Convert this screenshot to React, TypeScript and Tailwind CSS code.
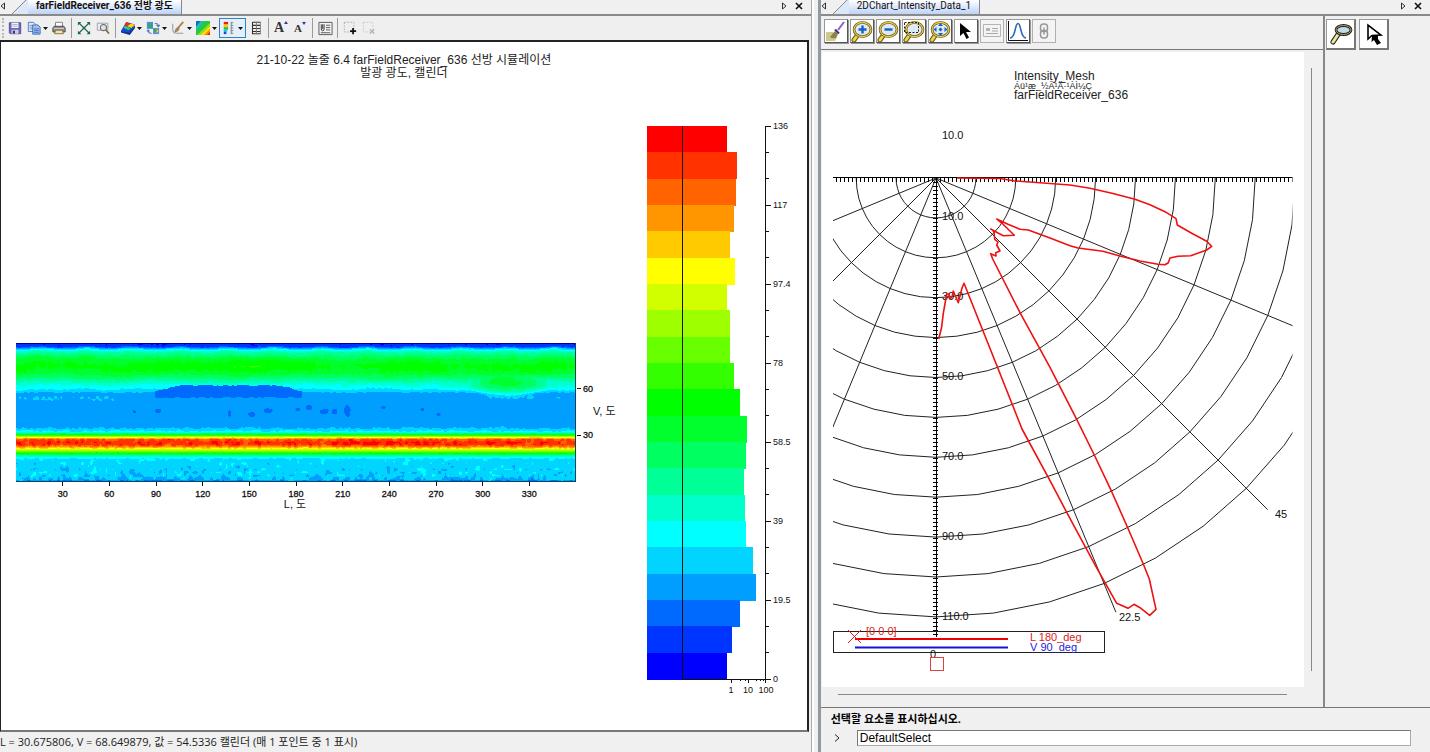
import type { ReactNode } from 'react';

const UI_FONT = "font-['Open_Sans','Noto_Sans_CJK_KR',sans-serif]";
const TAB_FONT = "font-['Roboto','Noto_Sans_CJK_KR',sans-serif]";
const PLOT_FONT = "font-['Liberation_Sans','Noto_Sans_CJK_KR',sans-serif]";

// low to high intensity
const PALETTE = [
  '#0000ff', '#0035ff', '#006aff', '#009fff', '#00d4ff', '#00ffff', '#00ffcb',
  '#00ff96', '#00ff61', '#00ff2c', '#00ff00', '#33ff00', '#68ff00', '#9dff00',
  '#d2ff00', '#ffff00', '#ffcb00', '#ff9600', '#ff6400', '#ff3200', '#ff0000',
];

const BAR_WIDTHS = [80, 90, 89, 87, 83, 88, 80, 83, 83, 87, 93, 100, 99, 97, 98, 99, 106, 109, 93, 85, 80];

/* ---------- heat map ---------- */

const MAP_W = 560;
const MAP_H = 138;

// [row, level] pairs, linear in between
const PROFILE = [
  [0, 1.2], [2, 2.2], [3, 3.8], [5, 5.7], [7, 7], [12, 8.7], [17, 9.7], [22, 10.3], [28, 9.8], [33, 8.7],
  [37, 7.4], [41, 6.2], [45, 5.3], [48, 4.3], [50, 3.6], [60, 3.5], [78, 3.5], [84, 3.75], [86, 4.4],
  [88, 5.2], [90, 8], [92, 11.5], [94, 15.5], [96, 19], [99, 19.8], [101, 19.6], [103, 18], [105, 15.7],
  [108, 12.5], [110, 10], [112, 7.5], [114, 5.5], [116, 4.7], [124, 4.5], [132, 4.4], [136, 3.9], [138, 2.5],
];

function profileAt(y: number) {
  if (y <= 0) return PROFILE[0][1];
  for (let i = 1; i < PROFILE.length; i++) {
    const [y1, v1] = PROFILE[i];
    if (y <= y1) {
      const [y0, v0] = PROFILE[i - 1];
      return v0 + ((v1 - v0) * (y - y0)) / (y1 - y0);
    }
  }
  return 2.5;
}

function hash(x: number, y: number, seed: number) {
  let h = Math.imul(x, 374761393) + Math.imul(y, 668265263) + Math.imul(seed, 974634777);
  h = Math.imul(h ^ (h >>> 13), 1274126177);
  return ((h ^ (h >>> 16)) >>> 0) / 4294967295;
}

const smooth = (t: number) => t * t * (3 - 2 * t);

function noise(x: number, y: number, sx: number, sy: number, seed: number) {
  const gx = x / sx, gy = y / sy;
  const ix = Math.floor(gx), iy = Math.floor(gy);
  const fx = smooth(gx - ix), fy = smooth(gy - iy);
  const top = hash(ix, iy, seed) * (1 - fx) + hash(ix + 1, iy, seed) * fx;
  const low = hash(ix, iy + 1, seed) * (1 - fx) + hash(ix + 1, iy + 1, seed) * fx;
  return (top * (1 - fy) + low * fy) * 2 - 1;
}

const bump = (d: number) => Math.max(0, 1 - d * d);

// [x, y, rx, ry] of the small dips in the middle band
const SPOTS = [
  [142, 67, 4, 3], [213, 70, 2, 4], [235, 71, 4, 3], [252, 67, 6, 3], [281, 66, 3, 2], [293, 64, 4, 3],
  [308, 68, 6, 4], [318, 68, 4, 4], [331, 67, 4, 7], [367, 64, 3, 2], [406, 66, 3, 2], [422, 71, 3, 2], [118, 68, 2, 2],
];

function levelAt(x: number, y: number) {
  const fine = noise(x, y, 3, 3, 1);
  const wide = noise(x, y, 22, 9, 2);
  // the top edge dips once every 60 degrees
  const dip = bump((((x + 46.7) % 93.5) - 93.5 / 2 - 46.7 + 93.5 / 2) / 26) + bump((((x + 93.5 - 46) % 93.5)) / 26) + bump((93.5 - ((x + 93.5 - 46) % 93.5)) / 26);
  let v = profileAt(y < 30 ? y - Math.min(1, dip) * 2.6 * (1 - y / 40) : y);
  if (y < 12) {
    v += fine * 0.35;
  } else if (y < 48) {
    v += fine * 0.35 + wide * 0.4;
    if (x > 140 && x < 300) v += 0.4 * bump((y - 21) / 9);
  } else if (y < 84) {
    v += fine * 0.25 + wide * 0.12;
    if ((x < 100 || x > 510) && y > 52 && y < 58) v += 0.4 * bump((y - 55) / 4);
    for (const [cx, cy, rx, ry] of SPOTS) {
      v -= 1.3 * bump(Math.hypot((x - cx) / rx, (y - cy) / ry) - fine * 0.3);
    }
  } else if (y < 94) {
    v += fine * 0.45;
  } else if (y < 106) {
    v += fine * 0.9 + noise(x, y, 6, 4, 3) * 0.5;
  } else if (y < 116) {
    v += fine * 0.35;
  } else {
    v += fine * (0.35 + (y - 116) / 34) + noise(x, y, 6, 5, 5) * 0.4;
  }
  // long dark patch
  const edge = Math.min((x - 138) / 26, (286 - x) / 22, 1);
  if (edge > 0 && y > 48 - edge * 6 + fine && y < 54 + fine) v = 2.5;
  // green island at the right
  v += 3.2 * bump(Math.hypot((x - 492) / 42, (y - 43) / 10));
  if (y > 46) v += 0.9 * bump(Math.hypot((x - 490) / 36, (y - 50) / 8));
  return Math.max(0, Math.min(20, Math.floor(v)));
}

function buildHeatPaths() {
  const paths = PALETTE.map(() => '');
  for (let y = 0; y < MAP_H; y++) {
    let start = 0;
    let current = levelAt(0, y);
    for (let x = 1; x <= MAP_W; x++) {
      const next = x < MAP_W ? levelAt(x, y) : -1;
      if (next !== current) {
        paths[current] += `M${start} ${y}h${x - start}v1h${start - x}z`;
        start = x;
        current = next;
      }
    }
  }
  return paths;
}

const HEAT_PATHS = buildHeatPaths();

function HeatMap() {
  return (
    <svg viewBox="0 0 605 172" className={`w-[605px] shrink-0 mt-[42px] ${PLOT_FONT}`} role="img" aria-label="광도 분포">
      <g shapeRendering="crispEdges">
        {HEAT_PATHS.map((d, i) => <path key={i} d={d} fill={PALETTE[i]} />)}
        <path d="M0 0.500h560" stroke="#0000a0" />
        <path d="M0 138.500h560M559.500 0v139" stroke="#004a5a" fill="none" />
      </g>
      <g stroke="#111" fontSize="9" strokeWidth="1">
        {[30, 60, 90, 120, 150, 180, 210, 240, 270, 300, 330].map((deg) => (
          <g key={deg}>
            <path d={`M${Math.floor((deg * 14) / 9)}.5 139v4`} />
            <text x={(deg * 14) / 9} y="154" textAnchor="middle" fill="#111" strokeWidth="0.3">{deg}</text>
          </g>
        ))}
        <path d="M561 45.500h4M561 92.500h4" />
        <text x="567" y="49" fill="#111" strokeWidth="0.3">60</text>
        <text x="567" y="95" fill="#111" strokeWidth="0.3">30</text>
      </g>
      <text x="279" y="165" textAnchor="middle" fontSize="11" fill="#111">L, 도</text>
      <text x="577" y="72" fontSize="11" fill="#111">V, 도</text>
    </svg>
  );
}

function Histogram() {
  const step = 553 / 21;
  const ticks = ['136', '117', '97.4', '78', '58.5', '39', '19.5', '0'];
  return (
    <svg viewBox="0 0 160 576" className={`w-[160px] shrink-0 ${PLOT_FONT}`} role="img" aria-label="광도 범례">
      <g shapeRendering="crispEdges">
        {BAR_WIDTHS.map((w, i) => (
          <rect key={i} x="0" y={6 + i * step} width={w} height={step + 0.5} fill={PALETTE[20 - i]} />
        ))}
        <path d="M35.500 6v554M36 559.500h83M118.500 6v554" stroke="#111" fill="none" />
        {BAR_WIDTHS.map((_, i) => <path key={i} d={`M119 ${6 + i * step}h3`} stroke="#111" />)}
        {ticks.map((_, i) => <path key={i} d={`M119 ${6.5 + i * 79}h5`} stroke="#111" />)}
        <path d="M84.500 560v3M93 560v1M98 560v1M101.500 560v3M109 560v1M113 560v1M116 560v1M118.500 560v3" stroke="#111" />
      </g>
      <g fontSize="9" fill="#111">
        {ticks.map((t, i) => <text key={t} x="126" y={9 + i * 79}>{t}</text>)}
        <text x="84" y="573" textAnchor="middle">1</text>
        <text x="101" y="573" textAnchor="middle">10</text>
        <text x="119" y="573" textAnchor="middle">100</text>
      </g>
    </svg>
  );
}

/* ---------- polar chart ---------- */

const CX = 114;
const CY = 126;

function ring(r: number) {
  const pts: string[] = [];
  for (let a = -90; a <= 90; a += 7.5) {
    const t = (a * Math.PI) / 180;
    pts.push(`${(CX + r * Math.sin(t)).toFixed(1)},${(CY + r * Math.cos(t)).toFixed(1)}`);
  }
  return pts.join(' ');
}

function spoke(deg: number, len: number) {
  const t = (deg * Math.PI) / 180;
  return `M${CX} ${CY}L${(CX + len * Math.sin(t)).toFixed(1)} ${(CY + len * Math.cos(t)).toFixed(1)}`;
}

const RINGS = Array.from({ length: 11 }, (_, i) => (i + 1) * 39.9);
const SPOKES = [[-67.5, 500], [-45, 500], [-22.5, 500], [22.5, 470], [45, 469], [67.5, 500]];

function axisTicks() {
  let d = '';
  for (let x = 14; x <= 470; x += 4) d += `M${x}.5 126v4`;
  for (let y = 130; y < 585; y += 4) d += `M111 ${y}.5h5`;
  return d;
}

const LOBE =
  '135,126 178,126.5 193,129 228,131.500 248,133 268,136.300 291,141.500 313,147.300 328,152.700 343,159.700 ' +
  '354,166.700 355.300,173 369.700,181.300 384.700,189.300 389.700,194.300 384.700,198 368.700,203.700 356,204.300 ' +
  '348,206 346.300,210.700 343,212.700 336,212.300 318,209 298,204 281,199.300 256,196 248,193.700 228,186 ' +
  '206.300,178 198,177.300 186,172.300 174.700,167 180,171.300 192.300,183.300 181.300,183.700 176,181 168.700,177 ' +
  '172,179.700 172.700,187.300 176,190 174.700,193 178,199 173.700,200.700 174,204 168.700,201.700 170.700,207 198,260.700 ' +
  '228,315.300 254.700,367.300 272.300,403 289.700,439.700 305.700,475.700 321.300,512 327.300,527 334,557.300 ' +
  '327.700,563.300 318,555.700 312,552.300 306,556.300 294.700,551.300 274,514.700 244.700,460.300 228,428.700 ' +
  '200,377 176.300,317.300 142,231.300 140,236 138,244 136.300,250.700 133,243 131.300,239 130,245 128,247 127,242 ' +
  '124.700,242 121.300,261.300 119.500,276 116.700,287';

function PolarChart() {
  return (
    <svg viewBox="0 0 482 635" className={`w-[482px] bg-white ${PLOT_FONT}`} role="img" aria-label="Intensity_Mesh">
      <clipPath id="plot-area"><rect x="11" y="120" width="459.500" height="500" /></clipPath>
      <g fontSize="12" fill="#222">
        <text x="192" y="28">Intensity_Mesh</text>
        <text x="192" y="37" fontSize="9">Áü¹æ_½Ã¹Ä·¹ÀÌ¼Ç</text>
        <text x="192" y="47">farFieldReceiver_636</text>
      </g>
      <g clipPath="url(#plot-area)" fill="none" stroke="#222" strokeWidth="1">
        {RINGS.map((r) => <polyline key={r} points={ring(r)} />)}
        {SPOKES.map(([deg, len]) => <path key={deg} d={spoke(deg, len)} />)}
        <path d="M11 125.500h460M114 126v459" stroke="#000" shapeRendering="crispEdges" />
        <path d={axisTicks()} stroke="#000" shapeRendering="crispEdges" />
      </g>
      <g fontSize="11" fill="#111">
        <text x="120" y="87">10.0</text>
        {[10, 30, 50, 70, 90, 110].map((v, i) => (
          <text key={v} x="120" y={168 + i * 80}>{`${v}.0`}</text>
        ))}
        <text x="297" y="569">22.5</text>
        <text x="453" y="466">45</text>
        <text x="108" y="606">0</text>
      </g>
      <polyline points={LOBE} fill="none" stroke="#f01010" strokeWidth="1.600" strokeLinejoin="round" />
      <rect x="11.500" y="579.500" width="271" height="21" fill="none" stroke="#222" />
      <path d="M33 587h153" stroke="#f00000" strokeWidth="2" />
      <path d="M33 595.500h153" stroke="#1414d8" strokeWidth="2" />
      <path d="M26 578l13 13M26 591l13-13" stroke="#e02020" />
      <g fontSize="11" fill="#e02020">
        <text x="44" y="583">[0 0 0]</text>
        <text x="208" y="589">L 180_deg</text>
        <text x="208" y="599" fill="#2222e0">V 90_deg</text>
      </g>
      <rect x="108.500" y="605.500" width="13" height="13" fill="none" stroke="#e04040" />
    </svg>
  );
}

/* ---------- toolbar parts ---------- */

function Icon({ size = 16, children }: { size?: number; children: ReactNode }) {
  return (
    <svg viewBox="0 0 16 16" width={size} height={size} fill="none" className="shrink-0" aria-hidden="true">
      {children}
    </svg>
  );
}

function Caret() {
  return <svg viewBox="0 0 5 3" width="5" height="3" aria-hidden="true"><path d="M0 0h5L2.500 3z" fill="#111" /></svg>;
}

function Tool({ label, menu, active, children }: { label: string; menu?: boolean; active?: boolean; children: ReactNode }) {
  const size = active ? 'w-[27px] h-5 border border-[#2a84c8] bg-[#e4eff9]' : menu ? 'w-6 h-5' : 'w-[18px] h-5';
  return (
    <button type="button" title={label} aria-label={label} className={`flex items-center justify-center gap-0.5 ${size}`}>
      {children}
      {menu && <Caret />}
    </button>
  );
}

function Separator() {
  return <div className="w-[5px] h-5 flex justify-center"><div className="w-px h-full bg-[#9a9a9a]" /></div>;
}

function PlotToolbar() {
  return (
    <div className="h-6 flex items-center gap-px bg-[#efefef]">
      <div className="w-[5px] h-5 flex justify-center"><div className="h-full border-l-2 border-dotted border-[#b8b8b8]" /></div>
      <Tool label="저장">
        <Icon size={14}>
          <path d="M1.500 2h13v12.500h-12l-1-1z" fill="#6e68b4" stroke="#4d4896" />
          <path d="M4 2h8v6H4z" fill="#f4f4fb" /><path d="M5 4h6M5 6h6" stroke="#a9a7cf" />
          <path d="M4 10h8v4.500H4z" fill="#cfcfe4" /><path d="M5.500 11h2.500v3.500H5.500z" fill="#3c3880" />
        </Icon>
      </Tool>
      <Tool label="복사" menu>
        <Icon size={14}>
          <path d="M1.500 1.500h6l2.500 2.500v8h-8.500z" fill="#dbe8fb" stroke="#4a74b8" /><path d="M3 5h4M3 7h4M3 9h4" stroke="#6c93cf" />
          <path d="M6.500 4.500h6l2.500 2.500v8H6.500z" fill="#9fc0f0" stroke="#3a66ae" /><path d="M8 9h5.500M8 11h5.500M8 13h5.500" stroke="#3f6fbd" />
        </Icon>
      </Tool>
      <Tool label="인쇄">
        <Icon size={14}>
          <path d="M4 1.500h8V7H4z" fill="#fff" stroke="#777" />
          <path d="M2.500 6h11l1.500 2v4.500H1V8z" fill="#8d8d8d" stroke="#444" /><path d="M2 8.500h12" stroke="#ddd" />
          <path d="M4 10.500h8l1 4H3z" fill="#f3e3b0" stroke="#7b6a3a" />
        </Icon>
      </Tool>
      <Separator />
      <Tool label="창에 맞춤">
        <Icon size={14}>
          <path d="M2 2l5 5M14 2L9 7M2 14l5-5M14 14L9 9" stroke="#186b43" strokeWidth="1.500" />
          <path d="M1 1h4L1 5zM15 1h-4l4 4zM1 15h4l-4-4zM15 15h-4l4-4z" fill="#186b43" /><path d="M6.500 6.500h3v3h-3z" fill="#40576f" />
        </Icon>
      </Tool>
      <Tool label="영역 확대">
        <Icon size={14}>
          <path d="M1.500 2.500h12v8h-12z" stroke="#999" /><circle cx="8.500" cy="7.500" r="3.500" fill="#d4e3f0" stroke="#686868" strokeWidth="1.200" />
          <path d="M11 10l4 4.500" stroke="#9b6a38" strokeWidth="2" />
        </Icon>
      </Tool>
      <Separator />
      <Tool label="3D 표면" menu>
        <Icon size={14}>
          <path d="M6 1l10 3-6 11-10-4z" fill="#1547dd" /><path d="M6 1l5 2-4 3-3-1z" fill="#f02818" />
          <path d="M11 3L16 4l-4 4-5-2z" fill="#ffd800" /><path d="M4 5.500l7 2.500-2 2.500-6-2.500z" fill="#2bd45c" />
          <path d="M0 11l9 2.500 7-8.500v3l-6 8-10-3z" fill="#12318c" />
        </Icon>
      </Tool>
      <Tool label="보기 전환" menu>
        <Icon size={14}>
          <path d="M1 1h7v8H1z" fill="#4f8fd3" /><path d="M2 3l3 2 2-3v5L4 8z" fill="#2cb04a" />
          <path d="M8 8h7v7H8z" fill="#6a8fd0" /><path d="M9 9h3v3H9z" fill="#2cb04a" /><path d="M12 10h2v3h-2z" fill="#f0c435" />
          <path d="M10 3q4-1 4 3M12 4.500L14 6.500 16 4.500M6.500 14q-4 0-4-3M1 12l1.500-2L4 12" stroke="#5678b8" strokeWidth="1.200" />
        </Icon>
      </Tool>
      <Tool label="그리기" menu>
        <Icon size={14}>
          <path d="M2 3v6q0 5 5 5h7" stroke="#999" strokeWidth="1.200" /><path d="M14 1L8 8" stroke="#b07a48" strokeWidth="2" />
          <path d="M8 7q-3 1-3.500 5.500Q9 12 9.500 8.500z" fill="#b58a64" stroke="#82593a" strokeWidth="0.600" />
        </Icon>
      </Tool>
      <Tool label="래스터 차트" menu>
        <svg viewBox="0 0 14 14" width="14" height="14" aria-hidden="true">
          <path d="M0 0h14v14H0z" fill="#2ac840" /><path d="M0 0h5L0 6z" fill="#1767d8" /><path d="M5 0h3L0 10V6z" fill="#17c5c5" />
          <path d="M14 2v3L4 14H1z" fill="#8ee020" /><path d="M14 5v4l-5 5H4z" fill="#ffe000" /><path d="M14 8v3l-3 3H8z" fill="#ff8a00" />
          <path d="M14 11v3h-3z" fill="#e82010" />
        </svg>
      </Tool>
      <Tool label="범례" menu active>
        <Icon size={14}>
          <path d="M2 1h5v3H2z" fill="#e82010" /><path d="M2 4h5v3H2z" fill="#ffc800" /><path d="M2 7h5v3H2z" fill="#20c840" />
          <path d="M2 10h4v2H2z" fill="#18c8e0" /><path d="M2 12h3v3H2z" fill="#1848e0" />
          <path d="M10.500 1v14M10.500 2h2.500M10.500 5h2.500M10.500 8h2.500M10.500 11h2.500M10.500 14h2.500" stroke="#777" />
        </Icon>
      </Tool>
      <Tool label="눈금">
        <Icon size={14}>
          <path d="M4 1v14M4 1.500h9M4 5h9M4 8.500h9M4 12h9M4 14.500h9" stroke="#333" strokeWidth="1.200" />
          <path d="M13 1v14M8.500 1v14" stroke="#777" />
        </Icon>
      </Tool>
      <Separator />
      <Tool label="글꼴 크게">
        <span className="font-['Liberation_Serif',serif] font-bold text-sm leading-4 text-[#333]">A</span>
        <svg viewBox="0 0 4 16" width="4" height="16" className="-ml-0.5" aria-hidden="true"><path d="M0 4h4L2 1z" fill="#3a35a8" /></svg>
      </Tool>
      <Tool label="글꼴 작게">
        <span className="font-['Liberation_Serif',serif] font-bold text-[11px] leading-4 text-[#333]">A</span>
        <svg viewBox="0 0 4 16" width="4" height="16" className="-ml-0.5" aria-hidden="true"><path d="M0 2h4L2 5z" fill="#3a35a8" /></svg>
      </Tool>
      <Separator />
      <Tool label="속성">
        <Icon size={15}>
          <path d="M1 1.500h14v13H1z" fill="#f4f4f4" stroke="#555" />
          <path d="M3.500 3.500v5q0 2 1.500 2t1.500-2v-5M5 3.500v5" stroke="#333" />
          <path d="M8.500 4.500H13M8.500 7H13M8.500 9.500H13M3 12.500h10" stroke="#555" />
        </Icon>
      </Tool>
      <Separator />
      <Tool label="영역 추가">
        <Icon size={14}><path d="M1.500 1.500h11v11h-11z" stroke="#aaa" strokeDasharray="2 1.500" /><path d="M11.500 8v7M8 11.500h7" stroke="#111" strokeWidth="2" /></Icon>
      </Tool>
      <Tool label="영역 삭제">
        <Icon size={14}><path d="M1.500 1.500h11v11h-11z" stroke="#c4c4c4" strokeDasharray="2 1.500" /><path d="M9 9.500l5 5M14 9.500l-5 5" stroke="#aaa" strokeWidth="1.200" /></Icon>
      </Tool>
    </div>
  );
}

function Magnifier({ children }: { children?: ReactNode }) {
  return (
    <svg viewBox="0 0 22 22" width="22" height="22" fill="none" aria-hidden="true">
      <path d="M6.500 15L3 20" stroke="#6b5716" strokeWidth="5" strokeLinecap="round" />
      <path d="M6.500 15L3 20" stroke="#e8d84c" strokeWidth="3" strokeLinecap="round" />
      <ellipse cx="11.500" cy="9.500" rx="8.500" ry="7" fill="#dcebf7" stroke="#5e4a10" strokeWidth="2.600" />
      <ellipse cx="11.500" cy="9.500" rx="8.500" ry="7" stroke="#e6cc44" strokeWidth="1.300" />
      {children}
    </svg>
  );
}

function ChartButton({ label, disabled, children }: { label: string; disabled?: boolean; children: ReactNode }) {
  const look = disabled
    ? 'border-[#b0b0b0] bg-[#f4f4f4]'
    : 'border-t-[#999] border-l-[#999] border-r-[#555] border-b-[#555] shadow-[1px_1px_0_#999] bg-white';
  return (
    <button type="button" title={label} aria-label={label} disabled={disabled}
      className={`w-6 h-6 border flex items-center justify-center ${look}`}>
      {children}
    </button>
  );
}

function ChartToolbar() {
  return (
    <div className="h-[33px] pl-[3px] pt-[3px] flex items-start gap-0.5">
      <ChartButton label="지우기">
        <svg viewBox="0 0 22 22" width="22" height="22" aria-hidden="true">
          <path d="M1 12l7 0 4 5-2 4H1z" fill="#cfc98a" /><path d="M10 11l3 3-2 4q-4 1-6-1z" fill="#8b8250" />
          <path d="M19 2l-6 8" stroke="#8a5fd0" strokeWidth="2" /><path d="M10 9.500l4 4" stroke="#45306e" strokeWidth="2" />
        </svg>
      </ChartButton>
      <ChartButton label="확대"><Magnifier><path d="M11.500 5.500v8M7.500 9.500h8" stroke="#1a5fc8" strokeWidth="2.400" /></Magnifier></ChartButton>
      <ChartButton label="축소"><Magnifier><path d="M7.500 9.500h8" stroke="#1a5fc8" strokeWidth="2.400" /></Magnifier></ChartButton>
      <ChartButton label="창 확대">
        <Magnifier><path d="M1.500 2.500h14v10h-14z" stroke="#222" strokeDasharray="2 1.500" /></Magnifier>
      </ChartButton>
      <ChartButton label="모두 보기">
        <Magnifier>
          <path d="M11.500 3l2.500 3H9zM11.500 16l2.500-3H9zM4.500 9.500l3-2.500v5zM18.500 9.500l-3-2.500v5zM11.500 7.500l2 2-2 2-2-2z" fill="#1a5fc8" />
        </Magnifier>
      </ChartButton>
      <ChartButton label="선택">
        <svg viewBox="0 0 22 22" width="22" height="22" aria-hidden="true"><path d="M5 3v13l3.500-3 3 6 2.500-1.500-3-5.500h5z" fill="#000" /></svg>
      </ChartButton>
      <ChartButton label="정보" disabled>
        <svg viewBox="0 0 22 22" width="22" height="22" fill="none" aria-hidden="true">
          <path d="M2.500 4.500h17v12h-17z" stroke="#b4b4b4" /><path d="M5 8h4v3H5z" fill="#b4b4b4" /><path d="M11 8.500h6M11 11h6M5 13.500h12" stroke="#aaa" />
        </svg>
      </ChartButton>
      <ChartButton label="곡선">
        <svg viewBox="0 0 22 22" width="22" height="22" fill="none" aria-hidden="true">
          <path d="M1.500 1v19.500H21" stroke="#111" /><path d="M3 18C9 18 7.500 3.500 11 3.500S13 18 19 18" stroke="#2864b8" strokeWidth="1.600" />
        </svg>
      </ChartButton>
      <ChartButton label="연결" disabled>
        <svg viewBox="0 0 22 22" width="22" height="22" fill="none" stroke="#999" strokeWidth="1.500" aria-hidden="true">
          <rect x="7.500" y="4" width="7" height="7.500" rx="3" /><rect x="7.500" y="10.500" width="7" height="7.500" rx="3" /><path d="M11 7.500v7" />
        </svg>
      </ChartButton>
    </div>
  );
}

function SideButton({ label, children }: { label: string; children: ReactNode }) {
  return (
    <button type="button" title={label} aria-label={label}
      className="w-[30px] h-[31px] bg-white border border-t-[#999] border-l-[#999] border-r-2 border-b-2 border-r-[#777] border-b-[#777] flex items-center justify-center">
      {children}
    </button>
  );
}

function TabStrip({ title, bold }: { title: string; bold?: boolean }) {
  return (
    <div className="h-4 flex items-start border-b-2 border-[#8a8a8a] bg-[#f0f0f0]">
      <button type="button" aria-label="이전 탭" className="w-3 h-3 flex items-center justify-start">
        <svg viewBox="0 0 6 8" width="6" height="8" aria-hidden="true"><path d="M4.500 1v6L1 4z" fill="none" stroke="#333" /></svg>
      </button>
      <svg viewBox="0 0 16 14" width="16" height="14" aria-hidden="true">
        <path d="M0 14L14 0h2v14z" fill="#dce8fa" /><path d="M0 14L14 0" stroke="#888" />
      </svg>
      <h2 className={`h-3.5 px-2 text-[10px] leading-3 whitespace-nowrap text-[#111] bg-linear-to-b from-white to-[#bdd3f7] border-r border-[#888] ${TAB_FONT} ${bold ? 'font-bold' : ''}`}>
        {title}
      </h2>
      <div className="ml-auto pr-2 flex items-center gap-2 h-3">
        <button type="button" aria-label="다음 탭">
          <svg viewBox="0 0 6 8" width="6" height="8" className="block" aria-hidden="true"><path d="M1.500 1v6L5 4z" fill="none" stroke="#333" /></svg>
        </button>
        <button type="button" aria-label="닫기">
          <svg viewBox="0 0 8 8" width="8" height="8" className="block" aria-hidden="true"><path d="M1 1l6 6M7 1L1 7" stroke="#111" strokeWidth="1.600" /></svg>
        </button>
      </div>
    </div>
  );
}

export default function App() {
  return (
    <main className={`h-screen flex overflow-hidden bg-[#f0f0f0] text-black ${UI_FONT}`}>
      {/* raster chart window */}
      <section className="flex-[813] min-w-0 flex flex-col border-r border-[#a8a8a8]">
        <TabStrip title="farFieldReceiver_636 전방 광도" bold />
        <PlotToolbar />
        <div className="flex-1 min-h-0 mr-0.5 bg-white border-2 border-t-[#222] border-r-[#222] border-l-[#222] border-b-[#777] border-l">
          <div className={`pt-3 text-center text-xs leading-[13px] text-[#222] ${PLOT_FONT}`}>
            <h1>21-10-22 놀줄 6.4 farFieldReceiver_636 선방 시뮬레이션</h1>
            <p>발광 광도, 캘린더</p>
          </div>
          <div className="flex items-center gap-[26px] pt-10 pl-[15px]">
            <HeatMap />
            <Histogram />
          </div>
        </div>
        <footer className="h-5 leading-5 text-[11px] whitespace-nowrap text-[#222]">
          L = 30.675806, V = 68.649879, 값 = 54.5336 캘린더 (매 1 포인트 중 1 표시)
        </footer>
      </section>

      <div className="w-1.5 bg-[#f0f0f0] border-l-2 border-white" />

      {/* polar chart window */}
      <section className="flex-[611] min-w-0 flex flex-col border-l-[3px] border-[#9498a0]">
        <TabStrip title="2DChart_Intensity_Data_1" />
        <div className="flex-1 min-h-0 flex">
          <div className="flex-1 min-w-0 flex flex-col">
            <ChartToolbar />
            <div className="flex-1 flex flex-col border-t border-[#777] pl-px pt-0.5">
              <div className="flex">
                <PolarChart />
                <div className="ml-[7px] my-4 border-l border-[#888]" />
              </div>
              <div className="ml-4 mr-9 mt-[7px] border-t border-[#888]" />
            </div>
          </div>
          <aside className="w-[107px] border-l-2 border-[#888] flex items-start gap-[3px] pt-[3px] pl-px">
            <SideButton label="확대경">
              <svg viewBox="0 0 26 26" width="26" height="26" fill="none" aria-hidden="true">
                <path d="M10 13.500l-5 7.500" stroke="#222" strokeWidth="5" strokeLinecap="round" />
                <path d="M10 13.500l-5 7.500" stroke="#e9e79c" strokeWidth="3" strokeLinecap="round" />
                <ellipse cx="15.500" cy="9" rx="7.500" ry="4.500" fill="#c3dbe6" stroke="#222" strokeWidth="2.800" />
                <ellipse cx="15.500" cy="9" rx="7.500" ry="4.500" stroke="#b6a45c" strokeWidth="1" />
              </svg>
            </SideButton>
            <SideButton label="선택 도구">
              <svg viewBox="0 0 26 26" width="26" height="26" fill="none" aria-hidden="true">
                <path d="M7 4v14l4-3.500 9-0.500z" fill="#fff" stroke="#000" strokeWidth="1.600" />
                <path d="M11 15h6l0 3 3 4-4 2-3-5-2.500 2z" fill="#000" />
              </svg>
            </SideButton>
          </aside>
        </div>
        <form className="h-[45px] border-t border-[#777] flex flex-col" onSubmit={(e) => e.preventDefault()}>
          <label htmlFor="command" className="pl-2.5 text-[11px] leading-[22px] font-bold">선택할 요소를 표시하십시오.</label>
          <div className="flex items-center pl-3">
            <svg viewBox="0 0 8 8" width="8" height="8" fill="none" aria-hidden="true"><path d="M2 0.500L6 4 2 7.500" stroke="#222" /></svg>
            <input id="command" defaultValue="DefaultSelect"
              className={`ml-4 mr-[19px] flex-1 h-4 px-0.5 text-xs leading-4 bg-white border border-t-[#777] border-l-[#777] border-r-[#aaa] border-b-[#aaa] ${PLOT_FONT}`} />
          </div>
        </form>
      </section>
    </main>
  );
}
